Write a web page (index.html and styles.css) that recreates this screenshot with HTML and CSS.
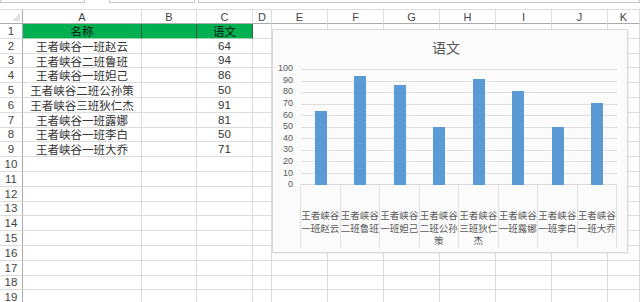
FILE: index.html
```html
<!DOCTYPE html>
<html lang="zh-CN">
<head>
    <meta charset="UTF-8">
    <meta name="viewport" content="width=device-width, initial-scale=1.0">
    <title>语文成绩表</title>
    <link rel="stylesheet" href="styles.css">
</head>
<body>
    <div class="toolbar">
        <div class="name-box"></div>
        <div class="func-box"></div>
        <div class="formula-box"></div>
    </div>

    <div class="sheet">
        <div id="grid" class="grid"></div>

        <!-- 浮动图表 -->
        <div class="chart">
            <div class="chart-title">语文</div>
            <div class="y-axis" id="yAxis"></div>
            <div class="plot">
                <div class="gridlines" id="gridlines"></div>
                <div class="bars" id="bars"></div>
            </div>
            <div class="categories" id="categories"></div>
        </div>
    </div>

    <script>
        // 表格数据
        const records = [
            { name: '王者峡谷一班赵云', score: 64 },
            { name: '王者峡谷二班鲁班', score: 94 },
            { name: '王者峡谷一班妲己', score: 86 },
            { name: '王者峡谷二班公孙策', score: 50 },
            { name: '王者峡谷三班狄仁杰', score: 91 },
            { name: '王者峡谷一班露娜', score: 81 },
            { name: '王者峡谷一班李白', score: 50 },
            { name: '王者峡谷一班大乔', score: 71 }
        ];

        const letters = ['A', 'B', 'C', 'D', 'E', 'F', 'G', 'H', 'I', 'J', 'K'];
        const rowCount = 19;
        const grid = document.getElementById('grid');

        function addCell(cls, text) {
            const cell = document.createElement('div');
            cell.className = cls;
            cell.textContent = text || '';
            grid.appendChild(cell);
        }

        // 列标题
        addCell('corner');
        letters.forEach(l => addCell('col-head', l));

        // 行
        for (let r = 1; r <= rowCount; r++) {
            addCell('row-head', r);
            letters.forEach((l, i) => {
                let cls = 'cell';
                let text = '';
                if (r === 1 && i < 3) {
                    cls += ' head-cell';
                    text = i === 0 ? '名称' : (i === 2 ? '语文' : '');
                } else if (r > 1 && r - 2 < records.length) {
                    if (i === 0) text = records[r - 2].name;
                    if (i === 2) text = records[r - 2].score;
                }
                addCell(cls, text);
            });
        }

        // 图表
        const pxPerUnit = 1.16;
        const yAxis = document.getElementById('yAxis');
        for (let v = 100; v >= 0; v -= 10) {
            const label = document.createElement('span');
            label.textContent = v;
            yAxis.appendChild(label);
        }

        const gridlines = document.getElementById('gridlines');
        for (let i = 0; i < 10; i++) {
            gridlines.appendChild(document.createElement('div'));
        }

        const bars = document.getElementById('bars');
        const categories = document.getElementById('categories');
        records.forEach(rec => {
            const slot = document.createElement('div');
            slot.className = 'bar-slot';
            const bar = document.createElement('div');
            bar.className = 'bar';
            bar.style.height = (rec.score * pxPerUnit) + 'px';
            slot.appendChild(bar);
            bars.appendChild(slot);

            const cat = document.createElement('div');
            cat.className = 'category';
            // 每行四个字
            const chunks = rec.name.match(/.{1,4}/g);
            cat.innerHTML = chunks.join('<br>');
            categories.appendChild(cat);
        });
    </script>
</body>
</html>
```

FILE: styles.css
```css
body {
    margin: 0;
    width: 640px;
    height: 302px;
    overflow: hidden;
    background-color: #fff;
    font-family: "Liberation Sans", "Noto Sans CJK SC", sans-serif;
}
.toolbar {
    display: flex;
    height: 9px;
    background-color: #fff;
}
.toolbar div {
    height: 2px;
    border: 1px solid #c8c8c8;
    border-top: none;
    background-color: #fff;
}
.name-box {
    width: 83px;
}
.func-box {
    width: 84px;
    margin-left: 24px;
}
.formula-box {
    flex: 1;
    margin-left: 3px;
}
.sheet {
    position: relative;
}
.grid {
    display: grid;
    grid-template-columns: 23px 119px 55px 56px 19px 56px 56px 56px 56px 56px 56px 32px;
    grid-template-rows: 14px repeat(19, 14.8px);
    border-top: 1px solid #dcdcdc;
}
.grid div {
    box-sizing: border-box;
    display: flex;
    align-items: center;
    justify-content: center;
    overflow: hidden;
    white-space: nowrap;
}
.corner {
    border-right: 1px solid #ababab;
    border-bottom: 1px solid #ababab;
    position: relative;
}
.corner::after {
    content: "";
    position: absolute;
    right: 2px;
    bottom: 2px;
    border-left: 8px solid transparent;
    border-bottom: 8px solid #dfdfdf;
}
.col-head {
    font-size: 11px;
    color: #444;
    border-right: 1px solid #dcdcdc;
    border-bottom: 1px solid #ababab;
}
.row-head {
    font-size: 11.5px;
    color: #444;
    border-right: 1px solid #ababab;
    border-bottom: 1px solid #dcdcdc;
}
.cell {
    font-size: 11.5px;
    color: #333;
    border-right: 1px solid #dcdcdc;
    border-bottom: 1px solid #dcdcdc;
}
.head-cell {
    background-color: #00b050;
    color: #111;
    border-right: 1px solid #3f5f48;
    border-bottom: 1px solid #9fcfae;
}
.chart {
    position: absolute;
    left: 272px;
    top: 20px;
    width: 356px;
    height: 224px;
    box-sizing: border-box;
    border: 1px solid #d9d9d9;
    background-color: #fbfbfb;
    box-shadow: 1px 1px 1px rgba(0, 0, 0, 0.05);
    display: grid;
    grid-template-columns: 28px 316px;
    grid-template-rows: 39px 116px 63px;
    font-family: "Liberation Sans", "Noto Sans CJK SC", sans-serif;
    color: #595959;
}
.chart-title {
    grid-column: 1 / 3;
    text-align: center;
    font-size: 14px;
    padding-top: 7px;
    padding-left: 2px;
}
.y-axis {
    display: flex;
    flex-direction: column;
    align-items: flex-end;
    margin-top: -5.8px;
    padding-right: 8px;
    font-size: 9px;
}
.y-axis span {
    height: 11.6px;
    line-height: 11.6px;
}
.plot {
    display: grid;
}
.gridlines,
.bars {
    grid-area: 1 / 1;
}
.gridlines {
    display: flex;
    flex-direction: column;
    border-bottom: 1px solid #d9d9d9;
}
.gridlines div {
    flex: 1;
    border-top: 1px solid #e0e0e0;
}
.bars {
    display: flex;
}
.bar-slot {
    flex: 1;
    display: flex;
    justify-content: center;
    align-items: flex-end;
}
.bar {
    width: 12px;
    background-color: #5b9bd5;
}
.categories {
    grid-column: 2;
    display: flex;
    margin-left: -1px;
}
.category {
    flex: 1;
    border-left: 1px solid #e0e0e0;
    padding-top: 25px;
    font-size: 9.5px;
    line-height: 12.5px;
    text-align: center;
    white-space: nowrap;
}
.category:last-child {
    border-right: 1px solid #e0e0e0;
}
```
